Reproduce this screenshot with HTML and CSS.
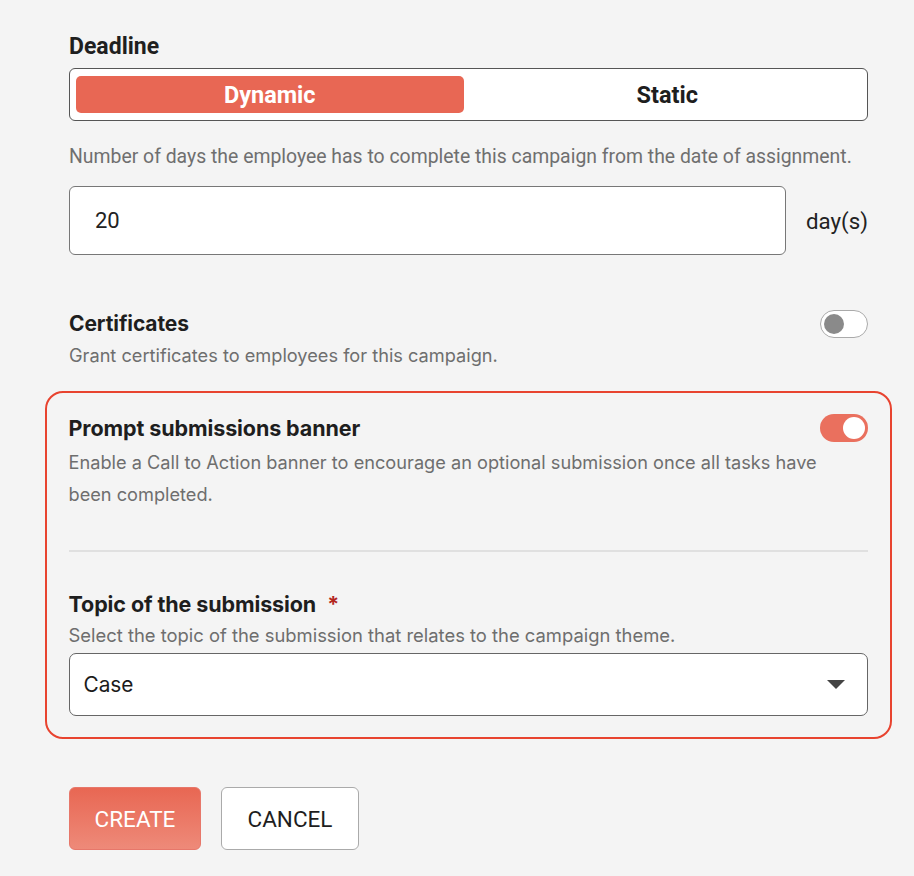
FILE: index.html
```html
<!DOCTYPE html>
<html>
<head>
<meta charset="utf-8">
<link rel="stylesheet" href="styles.css">
</head>
<body>
<div class="page">
  <div class="section deadline">
    <div class="label roboto">Deadline</div>
    <div class="segmented">
      <div class="seg active">Dynamic</div>
      <div class="seg">Static</div>
    </div>
    <div class="help roboto">Number of days the employee has to complete this campaign from the date of assignment.</div>
    <div class="days-row">
      <div class="input roboto">20</div>
      <div class="unit roboto">day(s)</div>
    </div>
  </div>

  <div class="setting cert">
    <div class="setting-head">
      <div class="heading">Certificates</div>
      <div class="toggle off"><span class="knob"></span></div>
    </div>
    <div class="desc">Grant certificates to employees for this campaign.</div>
  </div>

  <div class="highlight">
    <div class="setting">
      <div class="setting-head">
        <div class="heading">Prompt submissions banner</div>
        <div class="toggle on"><span class="knob"></span></div>
      </div>
      <div class="desc multi">Enable a Call to Action banner to encourage an optional submission once all tasks have been completed.</div>
    </div>
    <div class="divider"></div>
    <div class="topic">
      <div class="heading">Topic of the submission <span class="req">*</span></div>
      <div class="desc">Select the topic of the submission that relates to the campaign theme.</div>
      <div class="select">
        <span>Case</span>
        <svg class="caret" width="18" height="10" viewBox="0 0 18 10"><path d="M0 0 H18 L9 9 Z" fill="#444"/></svg>
      </div>
    </div>
  </div>

  <div class="actions">
    <button class="btn primary">CREATE</button>
    <button class="btn secondary">CANCEL</button>
  </div>
</div>
</body>
</html>
```
FILE: styles.css
```css
* { box-sizing: border-box; }
html, body { margin: 0; padding: 0; background: #f4f4f4; }
body { font-family: Inter, "Noto Sans", sans-serif; color: #212121; }
.roboto { font-family: Roboto, "Liberation Sans", sans-serif; }
.page { width: 914px; padding: 33px 0 0 69px; }
.section { width: 799px; }

.label { font-size: 23px; font-weight: 700; line-height: 28px; color: #1f1f1f; }
.segmented {
  margin-top: 7px;
  height: 53px;
  border: 1px solid #555;
  border-radius: 6px;
  background: #fff;
  display: flex;
  gap: 10px;
  padding: 7px 6px;
}
.seg {
  flex: 1;
  display: flex;
  align-items: center;
  justify-content: center;
  font-family: Roboto, "Liberation Sans", sans-serif;
  font-weight: 700;
  font-size: 23.5px;
  color: #1e1e1e;
  border-radius: 5px;
}
.seg.active { background: #e86754; color: #fff; }
.help { margin-top: 25px; font-size: 19.4px; color: #6f6f6f; line-height: 22px; }
.days-row { display: flex; align-items: center; margin-top: 18px; }
.input {
  width: 718px;
  height: 69px;
  background: #fff;
  border: 1px solid #777;
  border-radius: 6px;
  display: flex;
  align-items: center;
  padding-left: 25px;
  font-size: 22px;
  color: #222;
}
.unit { margin-left: 20px; font-size: 22.3px; color: #222; }

.setting { width: 799px; }
.cert { margin-top: 54px; }
.setting-head { display: flex; justify-content: space-between; align-items: center; height: 30px; }
.heading { font-size: 21.5px; line-height: 30px; font-weight: 700; color: #1e1e1e; letter-spacing: -0.1px; }
.cert .heading { font-size: 21px; }
.desc { font-size: 18.2px; color: #6e6e6e; line-height: 32px; max-width: 770px; }
.cert .desc { margin-top: 0; }

.toggle {
  width: 48px;
  height: 28px;
  border-radius: 14px;
  position: relative;
}
.toggle.off { background: #fff; border: 1px solid #aaa; }
.toggle.off .knob {
  position: absolute; left: 3px; top: 3px;
  width: 20px; height: 20px; border-radius: 50%; background: #8a8a8a;
}
.toggle.on { background: #ea705e; }
.toggle.on .knob {
  position: absolute; right: 3px; top: 3px;
  width: 22px; height: 22px; border-radius: 50%; background: #fff;
}

.highlight {
  margin: 20px 0 0 -24px;
  width: 847px;
  border: 2.5px solid #e8432f;
  border-radius: 18px;
  padding: 20px 21.5px 21px 21.5px;
}
.highlight .desc.multi { margin-top: 3px; }
.divider { height: 2px; background: #e0e0e0; margin-top: 40px; width: 799px; }
.topic { margin-top: 38px; }
.topic .heading { line-height: 28px; }
.req { color: #b3261e; margin-left: 6px; }
.topic .desc { line-height: 26px; margin-top: 4px; max-width: none; font-size: 18.4px; }
.select {
  margin-top: 5px;
  width: 799px;
  height: 63px;
  background: #fff;
  border: 1px solid #666;
  border-radius: 7px;
  display: flex;
  align-items: center;
  justify-content: space-between;
  padding: 0 22px 0 14px;
  font-size: 20.8px;
  color: #1b1b1b;
}

.actions { display: flex; gap: 20px; margin-top: 48px; }
.btn {
  height: 63px;
  border-radius: 6px;
  font-family: Roboto, "Liberation Sans", sans-serif;
  font-size: 22.5px;
  font-weight: 400;
  padding: 0;
  cursor: pointer;
}
.btn.primary {
  width: 132px;
  color: #fff;
  border: 1px solid #e7776a;
  background: linear-gradient(#e86753, #ee8a79);
}
.btn.secondary {
  width: 138px;
  color: #1e1e1e;
  background: #fff;
  border: 1px solid #aaa;
}
```
